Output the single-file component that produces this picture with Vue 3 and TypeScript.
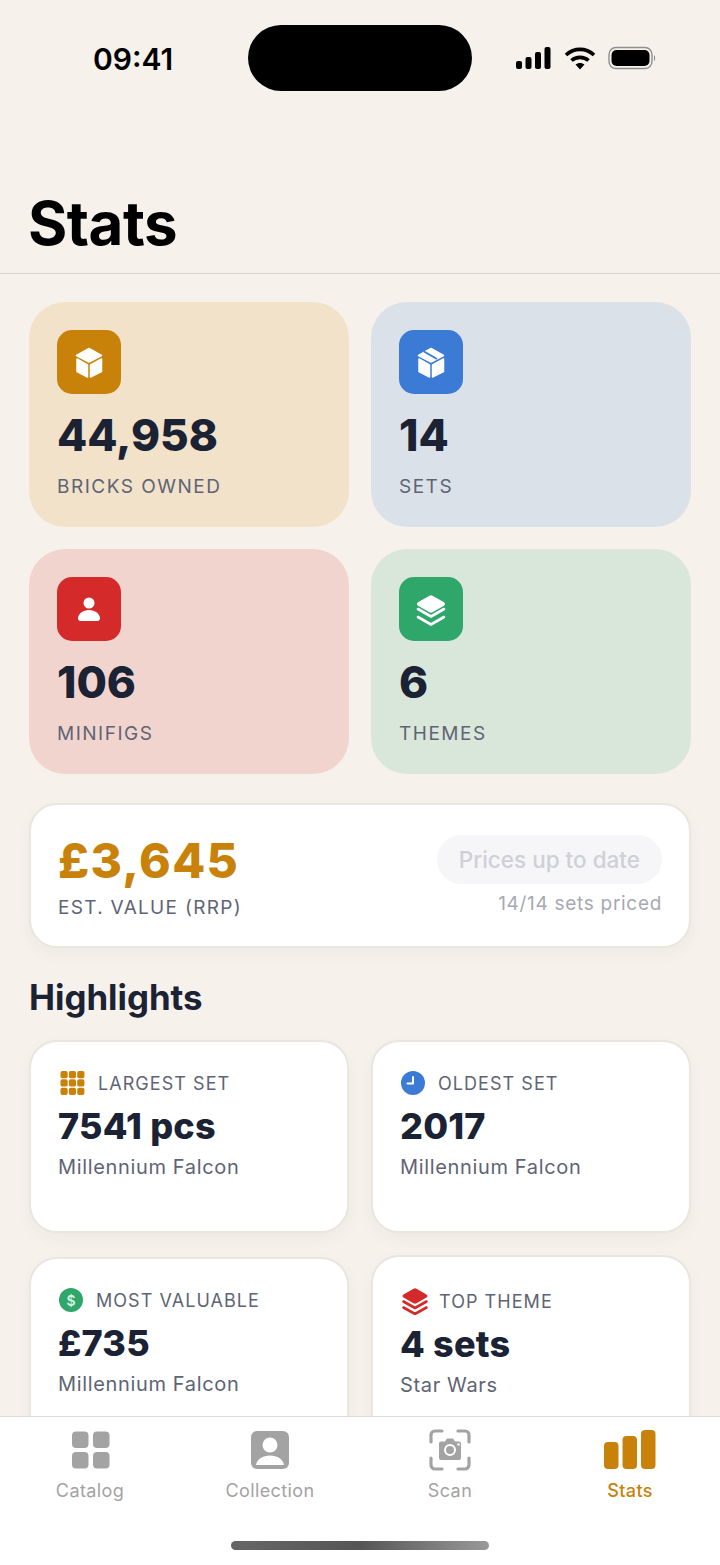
<template>
  <div class="screen">
    <div class="island"></div>
    <header class="top">
      <div class="status">
        <span class="time">09:41</span>
        <div class="status-icons">
          <svg width="36" height="24" viewBox="0 0 36 24" fill="#000">
            <rect x="0" y="15" width="6" height="8" rx="2" />
            <rect x="9.500" y="11" width="6" height="12" rx="2" />
            <rect x="19" y="6" width="6" height="17" rx="2" />
            <rect x="28.500" y="1" width="6" height="22" rx="2" />
          </svg>
          <svg width="30" height="24" viewBox="0 0 30 24" fill="none" stroke="#000" stroke-width="3.600">
            <path d="M1 9C9 1.500 21 1.500 29 9" />
            <path d="M6.500 14.500C11 10.300 19 10.300 23.500 14.500" />
            <path d="M15 23.500 10.500 18.600C13 16.500 17 16.500 19.500 18.600Z" fill="#000" stroke="none" />
          </svg>
          <svg width="48" height="24" viewBox="0 0 48 24" fill="none">
            <rect x="1" y="1.500" width="43" height="21" rx="7" stroke="#8f8f8f" stroke-width="1.400" />
            <rect x="3.500" y="4" width="38" height="16" rx="5" fill="#000" />
            <path d="M46 9c1.500.5 1.500 5.500 0 6z" fill="#8f8f8f" />
          </svg>
        </div>
      </div>
      <h1>Stats</h1>
    </header>

    <main class="content">
      <section class="stat-grid">
        <article v-for="s in stats" :key="s.label" class="stat" :class="s.tone">
          <div class="tile">
            <svg v-if="s.icon === 'cube' || s.icon === 'box'" width="64" height="64" viewBox="0 0 64 64" fill="#fff" stroke="#fff" stroke-width="1.500" stroke-linejoin="round">
              <path d="M32 18.500 44.500 25.500 32 32 19.500 25.500Z" />
              <path d="M20 29 30.500 34.800V47L20 41.500Z" />
              <path d="M44.500 29 33.500 34.800V47L44.500 41.500Z" />
              <path v-if="s.icon === 'box'" d="M25 21.500 38 29" stroke="#3b7bd6" stroke-width="2" fill="none" />
            </svg>
            <svg v-else-if="s.icon === 'person'" width="64" height="64" viewBox="0 0 64 64" fill="#fff">
              <circle cx="32" cy="26" r="5.500" />
              <path d="M21 41.500C21 37 26 33 32 33s11 4 11 8.500c0 1.500-1 2.500-2.500 2.500h-17C22 44 21 43 21 41.500Z" />
            </svg>
            <svg v-else width="64" height="64" viewBox="0 0 64 64" fill="#fff">
              <path d="M30.500 18.700a3 3 0 0 1 3 0L45 25.300c1.300.8 1.300 2.600 0 3.400L33.500 35.300a3 3 0 0 1-3 0L19 28.700c-1.300-.8-1.300-2.600 0-3.400Z" />
              <path d="M19 32 32 39.500 45 32M19 40 32 47.500 45 40" fill="none" stroke="#fff" stroke-width="2.600" stroke-linecap="round" stroke-linejoin="round" />
            </svg>
          </div>
          <div class="stat-value">{{ s.value }}</div>
          <div class="stat-label">{{ s.label }}</div>
        </article>
      </section>

      <section class="value-card">
        <div class="price-main">
          <div class="price">£3,645</div>
          <div class="price-label">EST. VALUE (RRP)</div>
        </div>
        <div class="price-side">
          <span class="pill">Prices up to date</span>
          <span class="priced">14/14 sets priced</span>
        </div>
      </section>

      <h2>Highlights</h2>

      <section class="hl-grid">
        <article class="hl">
          <div class="hl-head">
            <svg class="ic-grid" width="25" height="26" viewBox="0 0 26 26" fill="#c8820a">
              <template v-for="r in 3" :key="r">
                <rect v-for="c in 3" :key="c" :x="(c - 1) * 8.700 + 0.500" :y="(r - 1) * 8.700 + 0.500" width="7.500" height="7.500" rx="2" />
              </template>
            </svg>
            <span>LARGEST SET</span>
          </div>
          <div class="hl-value">7541 pcs</div>
          <div class="hl-sub">Millennium Falcon</div>
        </article>

        <article class="hl">
          <div class="hl-head">
            <svg class="ic-clock" width="24" height="24" viewBox="0 0 24 24">
              <circle cx="12" cy="12" r="12" fill="#3b7bd6" />
              <path d="M12 6V12.500H6.500" fill="none" stroke="#fff" stroke-width="2" stroke-linecap="round" stroke-linejoin="round" />
            </svg>
            <span>OLDEST SET</span>
          </div>
          <div class="hl-value">2017</div>
          <div class="hl-sub">Millennium Falcon</div>
        </article>

        <article class="hl low">
          <div class="hl-head">
            <span class="ic-dollar">$</span>
            <span>MOST VALUABLE</span>
          </div>
          <div class="hl-value">£735</div>
          <div class="hl-sub">Millennium Falcon</div>
        </article>

        <article class="hl">
          <div class="hl-head tall">
            <svg class="ic-stack" width="26" height="27" viewBox="0 0 26 27" fill="#d42a2a">
              <path d="M11.500.800a3 3 0 0 1 3 0L24.500 6.500c1.300.8 1.300 2.300 0 3L14.500 15.200a3 3 0 0 1-3 0L1.500 9.500c-1.300-.7-1.300-2.200 0-3Z" />
              <path d="M1.500 13.500 13 20 24.500 13.500M1.500 19.500 13 26 24.500 19.500" fill="none" stroke="#d42a2a" stroke-width="2.600" stroke-linecap="round" stroke-linejoin="round" />
            </svg>
            <span>TOP THEME</span>
          </div>
          <div class="hl-value">4 sets</div>
          <div class="hl-sub">Star Wars</div>
        </article>
      </section>
    </main>

    <nav class="tabs">
      <div class="tab">
        <svg width="40" height="40" viewBox="0 0 40 40" fill="#a3a3a3">
          <rect x="2" y="1.500" width="16.500" height="16.500" rx="4" />
          <rect x="23" y="1.500" width="16.500" height="16.500" rx="4" />
          <rect x="2" y="22" width="16.500" height="16.500" rx="4" />
          <rect x="23" y="22" width="16.500" height="16.500" rx="4" />
        </svg>
        <span>Catalog</span>
      </div>
      <div class="tab">
        <svg width="40" height="40" viewBox="0 0 40 40">
          <rect x="1" y="1" width="38" height="38" rx="6" fill="#a3a3a3" />
          <circle cx="20" cy="15" r="7.500" fill="#fff" />
          <path d="M6 35C7 29 13 25.500 20 25.500S33 29 34 35Z" fill="#fff" />
        </svg>
        <span>Collection</span>
      </div>
      <div class="tab">
        <svg width="42" height="42" viewBox="0 0 42 42" fill="none">
          <path d="M2 13V6a4 4 0 0 1 4-4h7M29 2h7a4 4 0 0 1 4 4v7M40 29v7a4 4 0 0 1-4 4h-7M13 40H6a4 4 0 0 1-4-4v-7" stroke="#a3a3a3" stroke-width="3.200" stroke-linecap="round" />
          <path d="M10 14.500a2 2 0 0 1 2-2h4l2-3h6l2 3h4a2 2 0 0 1 2 2V29a2 2 0 0 1-2 2H12a2 2 0 0 1-2-2Z" fill="#a3a3a3" />
          <circle cx="21" cy="21" r="5" fill="none" stroke="#fff" stroke-width="2" />
          <circle cx="29.500" cy="15.500" r="1.300" fill="#fff" />
        </svg>
        <span>Scan</span>
      </div>
      <div class="tab active">
        <svg width="52" height="40" viewBox="0 0 52 40" fill="#c8820a">
          <rect x="0" y="12" width="14.500" height="27" rx="4" />
          <rect x="18.500" y="6" width="14.500" height="33" rx="4" />
          <rect x="37" y="0" width="14.500" height="39" rx="4" />
        </svg>
        <span>Stats</span>
      </div>
      <div class="home"></div>
    </nav>
  </div>
</template>

<script setup lang="ts">
type StatCard = {
  label: string;
  value: string;
  tone: string;
  icon: 'cube' | 'box' | 'person' | 'layers';
};

const stats: StatCard[] = [
  { label: 'BRICKS OWNED', value: '44,958', tone: 'amber', icon: 'cube' },
  { label: 'SETS', value: '14', tone: 'blue', icon: 'box' },
  { label: 'MINIFIGS', value: '106', tone: 'red', icon: 'person' },
  { label: 'THEMES', value: '6', tone: 'green', icon: 'layers' }
];
</script>

<style>
html,
body {
  margin: 0;
  background: #f6f1eb;
}
</style>

<style scoped>
.screen {
  position: relative;
  width: 720px;
  height: 1565px;
  display: flex;
  flex-direction: column;
  overflow: hidden;
  background: #f6f1eb;
  color: #1a2233;
  font-family: Inter, "Liberation Sans", sans-serif;
}

.island {
  position: absolute;
  left: 248px;
  top: 25px;
  width: 224px;
  height: 66px;
  border-radius: 33px;
  background: #000;
}

.top {
  flex: none;
  height: 273px;
  box-sizing: content-box;
  border-bottom: 1px solid #d9d5ce;
}

.status {
  height: 116px;
  padding: 0 64px 0 93px;
  display: flex;
  align-items: center;
  justify-content: space-between;
}

.time {
  font-size: 30px;
  font-weight: 600;
  color: #000;
  margin-top: 1px;
}

.status-icons {
  display: flex;
  align-items: center;
  gap: 13px;
}

h1 {
  margin: 71px 0 0 28px;
  font-size: 60px;
  line-height: 72px;
  font-weight: 700;
  color: #000;
  letter-spacing: -0.5px;
}

.content {
  flex: 1;
  min-height: 0;
  overflow: hidden;
  padding: 28px 29px 0;
}

.stat-grid,
.hl-grid {
  display: grid;
  grid-template-columns: 320px 320px;
  gap: 22px;
}

.stat {
  height: 225px;
  box-sizing: border-box;
  padding: 28px;
  border-radius: 36px;
}

.amber { background: #f2e2ca; }
.blue { background: #dbe1e9; }
.red { background: #f2d4cf; }
.green { background: #d9e7da; }

.tile {
  width: 64px;
  height: 64px;
  border-radius: 15px;
}

.tile svg { display: block; }

.amber .tile { background: #c8820a; }
.blue .tile { background: #3b7bd6; }
.red .tile { background: #d42a2a; }
.green .tile { background: #2fa66a; }

.stat-value {
  margin-top: 15px;
  font-size: 44px;
  line-height: 53px;
  font-weight: 800;
}

.stat-label {
  margin-top: 13px;
  font-size: 19px;
  line-height: 24px;
  letter-spacing: 1.500px;
  color: #5e6475;
}

.value-card {
  margin-top: 29px;
  height: 145px;
  box-sizing: border-box;
  padding: 0 27px;
  display: flex;
  align-items: center;
  justify-content: space-between;
  background: #fff;
  border: 2px solid #e9e5df;
  border-radius: 28px;
  box-shadow: 0 6px 16px rgba(60, 40, 20, 0.04);
}

.price-main { margin-top: 2px; }

.price {
  font-size: 48px;
  line-height: 56px;
  font-weight: 800;
  letter-spacing: 1.300px;
  color: #c8820a;
}

.price-label {
  margin-top: 7px;
  font-size: 19px;
  line-height: 24px;
  letter-spacing: 1.300px;
  color: #5e6475;
}

.price-side {
  display: flex;
  flex-direction: column;
  align-items: flex-end;
  gap: 8px;
}

.pill {
  height: 49px;
  padding: 0 22px;
  display: flex;
  align-items: center;
  border-radius: 25px;
  background: #f6f6f8;
  color: #cfd0d6;
  font-size: 22.500px;
  font-weight: 500;
}

.priced {
  font-size: 19px;
  line-height: 24px;
  letter-spacing: 0.700px;
  color: #a6a9b3;
}

h2 {
  margin: 29px 0 22px;
  font-size: 34.800px;
  line-height: 41px;
  font-weight: 700;
}

.hl {
  height: 193px;
  box-sizing: border-box;
  padding: 28px 27px 0;
  background: #fff;
  border: 2px solid #e9e5df;
  border-radius: 28px;
  box-shadow: 0 6px 16px rgba(60, 40, 20, 0.04);
}

.hl.low { margin-top: 2px; }

.hl-head {
  height: 26px;
  display: flex;
  align-items: center;
  gap: 13px;
  font-size: 18px;
  letter-spacing: 1.050px;
  color: #5e6475;
}

.hl-head.tall {
  margin: 3px 0 2px;
  gap: 11px;
}

.ic-grid { margin-left: 2px; }
.ic-clock { margin-left: 1px; }
.ic-stack { margin-left: 2px; }

.ic-dollar {
  width: 24px;
  height: 24px;
  margin-left: 1px;
  display: flex;
  align-items: center;
  justify-content: center;
  border-radius: 50%;
  background: #2fa66a;
  color: #d6f0e1;
  font-size: 14px;
  font-weight: 600;
  letter-spacing: 0;
}

.hl-value {
  margin-top: 8px;
  font-size: 36px;
  line-height: 44px;
  font-weight: 800;
  letter-spacing: 0.200px;
}

.hl-sub {
  margin-top: 6px;
  font-size: 20px;
  line-height: 26px;
  letter-spacing: 0.650px;
  color: #5e6475;
}

.tabs {
  position: relative;
  flex: none;
  height: 148px;
  display: grid;
  grid-template-columns: repeat(4, 180px);
  align-items: start;
  background: #fff;
  border-top: 1px solid #dcdad6;
}

.tab {
  height: 90px;
  padding-top: 12px;
  display: flex;
  flex-direction: column;
  align-items: center;
  color: #a3a3a3;
  font-size: 18px;
  letter-spacing: 0.400px;
}

.tab svg { display: block; height: 42px; }

.tab span {
  margin-top: 8px;
  line-height: 24px;
}

.tab.active {
  color: #c8820a;
  font-weight: 500;
}

.home {
  position: absolute;
  left: 231px;
  top: 124px;
  width: 258px;
  height: 9px;
  border-radius: 5px;
  background: linear-gradient(90deg, #666 0%, #555 50%, #999 100%);
}
</style>
